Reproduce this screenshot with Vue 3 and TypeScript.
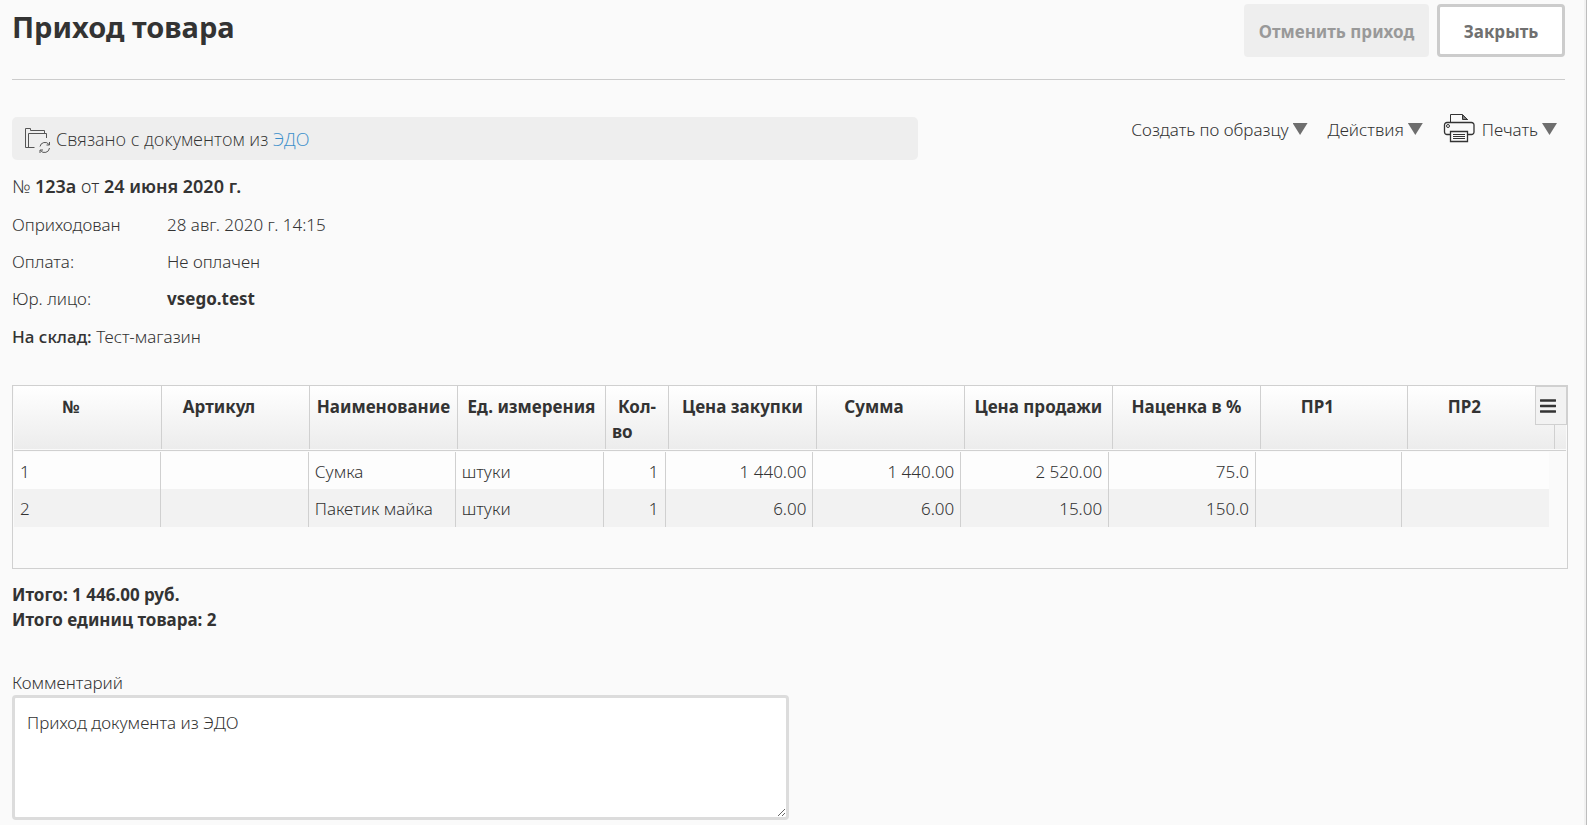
<script setup lang="ts">
import { ref } from 'vue'

interface Column {
  title: string
  // last line of a title that has to wrap
  tail?: string
  headWidth: number
  bodyWidth: number
  numeric?: boolean
}

const columns: Column[] = [
  { title: '№', headWidth: 148, bodyWidth: 147 },
  { title: 'Артикул', headWidth: 148, bodyWidth: 148 },
  { title: 'Наименование', headWidth: 148, bodyWidth: 147 },
  { title: 'Ед. измерения', headWidth: 148, bodyWidth: 148 },
  { title: 'Кол-', tail: 'во', headWidth: 63, bodyWidth: 62, numeric: true },
  { title: 'Цена закупки', headWidth: 148, bodyWidth: 148, numeric: true },
  { title: 'Сумма', headWidth: 148, bodyWidth: 148, numeric: true },
  { title: 'Цена продажи', headWidth: 148, bodyWidth: 148, numeric: true },
  { title: 'Наценка в %', headWidth: 148, bodyWidth: 147, numeric: true },
  { title: 'ПР1', headWidth: 147, bodyWidth: 146 },
  { title: 'ПР2', headWidth: 147, bodyWidth: 147 },
]

const headTotal = columns.reduce((sum, c) => sum + c.headWidth, 0)
const bodyTotal = columns.reduce((sum, c) => sum + c.bodyWidth, 0)

const rows: string[][] = [
  ['1', '', 'Сумка', 'штуки', '1', '1 440.00', '1 440.00', '2 520.00', '75.0', '', ''],
  ['2', '', 'Пакетик майка', 'штуки', '1', '6.00', '6.00', '15.00', '150.0', '', ''],
]

const comment = ref('Приход документа из ЭДО')
</script>

<template>
  <main class="page">
    <header class="top">
      <h1>Приход товара</h1>
      <div class="buttons">
        <button class="btn btn-muted" type="button" disabled>Отменить приход</button>
        <button class="btn btn-plain" type="button">Закрыть</button>
      </div>
    </header>

    <div class="summary">
      <section class="info">
        <div class="linked">
          <svg class="folder" width="28" height="28" viewBox="0 0 28 28" fill="none" stroke="#555" aria-hidden="true">
            <path d="M10.500 20.500H1.500V1.500H6.500V3.500H20.500V6.500" />
            <path d="M4.500 20V6.500H22.500V11" />
            <path d="M16 19.500a5 5 0 0 1 9-2M25.500 21a5 5 0 0 1-9 2.500" />
            <path d="M25.500 15v3h-3M16 26v-3h3" />
          </svg>
          <span>Связано с документом из <a href="#edo">ЭДО</a></span>
        </div>
        <p class="number">№ <b>123а</b> от <b>24 июня 2020 г.</b></p>
        <dl>
          <div><dt>Оприходован</dt><dd>28 авг. 2020 г. 14:15</dd></div>
          <div><dt>Оплата:</dt><dd>Не оплачен</dd></div>
          <div><dt>Юр. лицо:</dt><dd><b>vsego.test</b></dd></div>
        </dl>
        <p><span class="semi">На склад:</span> Тест-магазин</p>
      </section>

      <nav class="menus">
        <button class="menu" type="button">Создать по образцу<i class="arrow"></i></button>
        <button class="menu" type="button">Действия<i class="arrow"></i></button>
        <button class="menu" type="button">
          <svg class="printer" width="32" height="29" viewBox="0 0 32 29" fill="none" stroke="#333" aria-hidden="true">
            <path d="M7.500 8V0.500H19.500L24.500 5.500V6" />
            <path d="M19.500 1V5.500H24.500Z" fill="#888" />
            <path d="M7 20.500H4a2.500 2.500 0 0 1-2.500-2.500V11a2.500 2.500 0 0 1 2.500-2.500H28.500a2.500 2.500 0 0 1 2.500 2.500V18a2.500 2.500 0 0 1-2.500 2.500H25" stroke-width="1.300" />
            <circle cx="5" cy="12" r="1.500" />
            <path d="M7.500 17.500H24.500V27.500H7.500Z" stroke-width="1.300" />
            <path d="M10 20.500H22M10 22.500H22M10 24.500H22" />
          </svg>
          Печать<i class="arrow"></i>
        </button>
      </nav>
    </div>

    <section class="grid">
      <div class="grid-head">
        <table>
          <colgroup>
            <col v-for="c in columns" :key="c.title" :style="{ width: (c.headWidth / headTotal) * 100 + '%' }" />
          </colgroup>
          <thead>
            <tr>
              <th v-for="c in columns" :key="c.title" scope="col">
                <template v-if="c.tail">{{ c.title }}<br /><span class="tail">{{ c.tail }}</span></template>
                <template v-else>{{ c.title }}<span class="slot"></span></template>
              </th>
            </tr>
          </thead>
        </table>
        <button class="burger" type="button" aria-label="Столбцы">
          <svg width="16" height="14" viewBox="0 0 16 14" aria-hidden="true">
            <path d="M0.500 1.500H15.500M0.500 7H15.500M0.500 12.500H15.500" stroke="#333" stroke-width="2.300" stroke-linecap="round" />
          </svg>
        </button>
      </div>
      <div class="grid-body">
        <table>
          <colgroup>
            <col v-for="c in columns" :key="c.title" :style="{ width: (c.bodyWidth / bodyTotal) * 100 + '%' }" />
          </colgroup>
          <tbody>
            <tr v-for="row in rows" :key="row[0]">
              <td v-for="(cell, i) in row" :key="i" :class="{ num: columns[i].numeric }">{{ cell }}</td>
            </tr>
          </tbody>
        </table>
      </div>
    </section>

    <section class="totals">
      <div>Итого: 1 446.00 руб.</div>
      <div>Итого единиц товара: 2</div>
    </section>

    <section class="comment">
      <label for="comment">Комментарий</label>
      <textarea id="comment" v-model="comment"></textarea>
    </section>
  </main>
</template>

<style>
body {
  margin: 0;
  background: #fafafa;
}
</style>

<style scoped>
.page {
  box-sizing: border-box;
  min-height: 100vh;
  padding: 0 21px 6px 12px;
  border-right: 1px solid #bdbdbd;
  box-shadow: inset -2px 0 0 #f1f1f1;
  background: #fafafa;
  color: #333;
  font: 350 17px/25px "Noto Sans", "Open Sans", sans-serif;
}

b {
  font-weight: 700;
}

p,
dl,
dd,
h1 {
  margin: 0;
}

button,
textarea {
  font: inherit;
  color: inherit;
}

.top {
  display: flex;
  justify-content: space-between;
  align-items: flex-start;
  height: 75px;
  padding-top: 4px;
  border-bottom: 1px solid #ccc;
}

h1 {
  font-size: 29px;
  line-height: 46px;
  font-weight: 700;
}

.buttons {
  display: flex;
  gap: 8px;
}

.btn {
  height: 53px;
  padding: 2px 10px 0;
  border: 3px solid #ccc;
  border-radius: 4px;
  font-weight: 700;
}

.btn-muted {
  min-width: 185px;
  border-color: #eee;
  background: #eee;
  color: #999;
}

.btn-plain {
  min-width: 128px;
  background: #fff;
  color: #707070;
}

.summary {
  display: flex;
  justify-content: space-between;
  align-items: flex-start;
  padding-top: 37px;
}

.info {
  display: flex;
  flex-direction: column;
  gap: 13px;
  width: 906px;
}

.linked {
  box-sizing: border-box;
  display: flex;
  align-items: center;
  gap: 4px;
  height: 43px;
  padding: 2px 12px 0;
  border-radius: 5px;
  background: #eee;
  font-family: "Open Sans", "Noto Sans", sans-serif;
  font-size: 18px;
}

.linked a {
  color: #3a8ecb;
  text-decoration: none;
}

.folder {
  margin-top: 2px;
}

.number {
  margin-top: 1px;
  font-size: 18px;
}

.number b {
  font-weight: 650;
}

dl {
  display: flex;
  flex-direction: column;
  gap: 12px;
}

dl div {
  display: flex;
}

dt {
  width: 155px;
}

.semi {
  font-weight: 550;
}

.menus {
  display: flex;
  align-items: center;
  gap: 20px;
  margin-top: -2px;
  padding-right: 8px;
}

.menu {
  display: flex;
  align-items: center;
  height: 28px;
  padding: 0;
  border: 0;
  background: none;
  white-space: nowrap;
}

.arrow {
  width: 15px;
  height: 12px;
  margin-left: 4px;
  background: #6e6e6e;
  clip-path: polygon(0 0, 100% 0, 50% 100%);
}

.printer {
  margin: 0 7px 2px 0;
}

.grid {
  margin: 36px -3px 0 0;
  padding: 0 1px;
  border: 1px solid #d0d0d0;
}

table {
  width: 100%;
  border-collapse: separate;
  border-spacing: 0;
  table-layout: fixed;
}

.grid-head {
  position: relative;
  padding-right: 11px;
  border-bottom: 1px solid #d0d0d0;
  background: linear-gradient(#fff, #ececec 63px, #fafafa 63px);
}

.grid-head table {
  margin-bottom: 1px;
}

th {
  height: 50px;
  padding: 8px 6px 5px;
  border-right: 1px solid #d0d0d0;
  font-weight: 700;
  text-align: center;
  vertical-align: top;
}

.slot {
  display: inline-block;
  width: 33px;
}

.tail {
  display: block;
  text-align: left;
}

.burger {
  position: absolute;
  top: 0;
  right: -1px;
  display: flex;
  align-items: center;
  justify-content: center;
  width: 32px;
  height: 39px;
  padding: 0 6px 0 0;
  border: 1px solid #d0d0d0;
  background: #f2f2f2;
}

.grid-body {
  padding: 1px 17px 41px 0;
}

td {
  height: 36px;
  padding: 1px 6px 0;
  border-right: 1px solid #d0d0d0;
  background: #fdfdfd;
}

tr:nth-child(even) td {
  height: 37px;
  background: #f2f2f2;
}

td:last-child {
  border-right: 0;
}

.num {
  text-align: right;
}

.totals {
  padding-top: 13px;
  font-weight: 700;
}

.comment {
  padding-top: 38px;
}

.comment label {
  display: block;
}

textarea {
  display: block;
  box-sizing: border-box;
  width: 50%;
  height: 125px;
  padding: 12px;
  border: 3px solid #dcdcdc;
  border-radius: 4px;
  background: #fff;
  outline: 0;
}
</style>
